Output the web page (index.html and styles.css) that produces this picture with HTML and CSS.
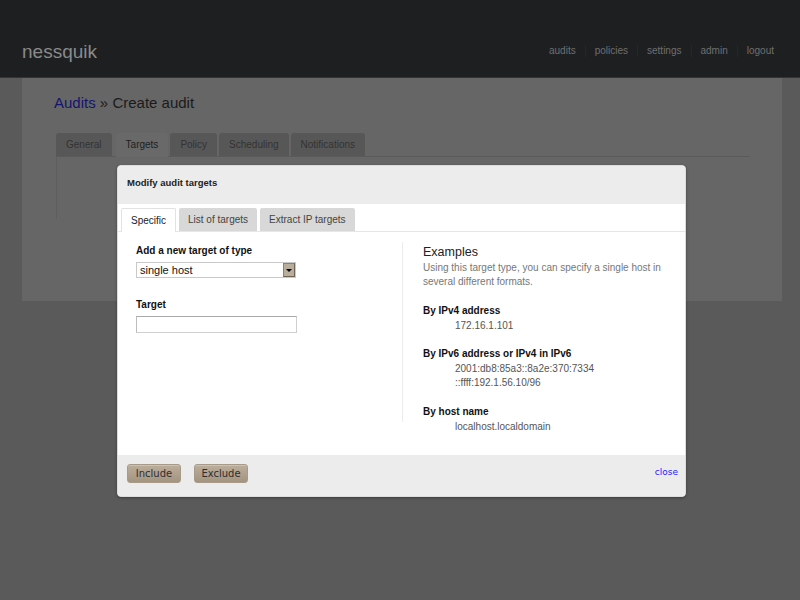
FILE: index.html
```html
<!DOCTYPE html>
<html>
<head>
<meta charset="utf-8">
<title>nessquik - Create audit</title>
<link rel="stylesheet" href="styles.css">
</head>
<body>
<header class="topbar">
  <div class="logo">nessquik</div>
  <nav class="nav">
    <a class="nav-item first">audits</a>
    <a class="nav-item">policies</a>
    <a class="nav-item">settings</a>
    <a class="nav-item">admin</a>
    <a class="nav-item">logout</a>
  </nav>
</header>
<div class="stage">
  <main class="page">
    <h1 class="crumbs"><a class="crumb-link">Audits</a> » Create audit</h1>
    <div class="tabs">
      <span class="tab">General</span>
      <span class="tab active">Targets</span>
      <span class="tab">Policy</span>
      <span class="tab">Scheduling</span>
      <span class="tab">Notifications</span>
    </div>
    <div class="tabpanel"></div>
  </main>

  <section class="modal">
    <div class="modal-head">Modify audit targets</div>
    <div class="mtabs">
      <span class="mtab active">Specific</span>
      <span class="mtab">List of targets</span>
      <span class="mtab">Extract IP targets</span>
    </div>
    <div class="modal-body">
      <div class="col-left">
        <div class="label">Add a new target of type</div>
        <div class="select"><span class="select-text">single host</span><span class="select-btn"><span class="arrow"></span></span></div>
        <div class="label label-gap">Target</div>
        <div class="input"></div>
      </div>
      <div class="col-right">
        <div class="ex-title">Examples</div>
        <p class="ex-desc">Using this target type, you can specify a single host in several different formats.</p>
        <div class="ex-group g1">
          <div class="ex-head">By IPv4 address</div>
          <div class="ex-val">172.16.1.101</div>
        </div>
        <div class="ex-group g2">
          <div class="ex-head">By IPv6 address or IPv4 in IPv6</div>
          <div class="ex-val">2001:db8:85a3::8a2e:370:7334</div>
          <div class="ex-val">::ffff:192.1.56.10/96</div>
        </div>
        <div class="ex-group g3">
          <div class="ex-head">By host name</div>
          <div class="ex-val">localhost.localdomain</div>
        </div>
      </div>
    </div>
    <div class="modal-foot">
      <div class="buttons">
        <button class="btn">Include</button>
        <button class="btn">Exclude</button>
      </div>
      <a class="close">close</a>
    </div>
  </section>
</div>
</body>
</html>
```
FILE: styles.css
```css
* { box-sizing: border-box; }
html, body { margin: 0; padding: 0; }
body {
  width: 800px;
  height: 600px;
  overflow: hidden;
  background: #5a5a5a;
  font-family: "Liberation Sans", Arial, sans-serif;
}
.topbar {
  height: 78px;
  background: #1e1f21;
  border-bottom: 1px solid #333436;
  display: flex;
  justify-content: space-between;
  align-items: flex-start;
  padding: 38px 17px 0 22px;
}
.logo {
  font-size: 19px;
  line-height: 24px;
  margin-top: 2px;
  color: #8a8a8a;
}
.nav {
  display: flex;
  padding-top: 7px;
}
.nav-item {
  font-size: 10px;
  line-height: 12px;
  color: #6f6f6f;
  padding: 0 9px;
  border-left: 1px solid #26272a;
}
.nav-item.first { border-left: none; }

.stage { position: relative; }
.page {
  margin-left: 22px;
  width: 760px;
  height: 223px;
  background: #666666;
  padding: 15px 32px 0 34px;
}
.crumbs {
  margin: 0 0 0 -2px;
  font-size: 15px;
  font-weight: normal;
  line-height: 20px;
  color: #1b1b1b;
}
.crumb-link { color: #141470; }
.tabs {
  display: flex;
  gap: 2px;
  margin-top: 20px;
  border-bottom: 1px solid #5a5a5a;
  height: 24px;
}
.tab {
  height: 23px;
  padding: 0 10px;
  font-size: 10px;
  line-height: 23px;
  color: #333;
  background: #575757;
  border-radius: 3px 3px 0 0;
}
.tab.active {
  background: #696969;
  color: #1e1e1e;
  height: 24px;
  margin-left: 2px;
}
.tabpanel {
  height: 62px;
  border-left: 1px solid #5e5e5e;
}

.modal {
  position: absolute;
  left: 117px;
  top: 87px;
  width: 569px;
  height: 332px;
  background: #ffffff;
  border: 1px solid #dcdcdc;
  border-radius: 4px;
  box-shadow: 0 1px 3px rgba(0,0,0,0.35);
  display: flex;
  flex-direction: column;
  overflow: hidden;
}
.modal-head {
  height: 38px;
  background: #ececec;
  padding-left: 9px;
  font-size: 9.5px;
  font-weight: bold;
  line-height: 34px;
  color: #222;
}
.mtabs {
  display: flex;
  gap: 3px;
  margin-top: 4px;
  padding: 0 3px;
  height: 24px;
  border-bottom: 1px solid #e6e6e6;
}
.mtab {
  height: 23px;
  padding: 1px 9px 0;
  font-size: 10px;
  line-height: 22px;
  color: #444;
  background: #d8d8d8;
  border-radius: 2px 2px 0 0;
}
.mtab.active {
  background: #fff;
  color: #222;
  height: 24px;
  border: 1px solid #e2e2e2;
  border-bottom: none;
  padding: 1px 9px 0;
  line-height: 21px;
}
.modal-body {
  flex: 1;
  display: flex;
  align-items: flex-start;
  padding: 10px 15px 0 18px;
}
.col-left {
  width: 267px;
  height: 180px;
  border-right: 1px solid #ececec;
}
.label {
  font-size: 10px;
  font-weight: bold;
  line-height: 14px;
  color: #111;
  margin-top: 2px;
}
.label-gap { margin-top: 20px; }
.select {
  margin-top: 4px;
  width: 160px;
  height: 16px;
  border: 1px solid #c9c9c9;
  display: flex;
  justify-content: space-between;
  align-items: stretch;
}
.select-text {
  font-size: 11px;
  line-height: 14px;
  padding-left: 3px;
  color: #111;
}
.select-btn {
  width: 12px;
  background: #b9ad9c;
  border: 1px solid #8d8171;
  border-right-color: #6e6354;
  border-bottom-color: #6e6354;
  display: flex;
  align-items: center;
  justify-content: center;
}
.arrow {
  width: 0;
  height: 0;
  border-left: 3px solid transparent;
  border-right: 3px solid transparent;
  border-top: 3px solid #000;
}
.input {
  margin-top: 4px;
  width: 161px;
  height: 17px;
  border: 1px solid #cfcfcf;
  border-top-color: #a9a9a9;
  border-left-color: #bdbdbd;
}
.col-right {
  padding-left: 20px;
}
.ex-title {
  font-size: 12.5px;
  line-height: 16px;
  margin-top: 2px;
  color: #222;
}
.ex-desc {
  margin: 1px 0 0;
  font-size: 10px;
  line-height: 14px;
  color: #777;
  width: 240px;
}
.ex-group { margin-top: 14px; }
.ex-group.g1 { margin-top: 15px; }
.ex-group.g3 { margin-top: 15px; }
.ex-head {
  font-size: 10px;
  font-weight: bold;
  line-height: 14px;
  color: #111;
}
.ex-val {
  font-size: 10px;
  line-height: 14px;
  padding-left: 32px;
  color: #555;
  margin-top: 1px;
}
.ex-val + .ex-val { margin-top: 0; }

.modal-foot {
  height: 41px;
  background: #ececec;
  display: flex;
  justify-content: space-between;
  align-items: flex-start;
  padding: 9px 7px 0 9px;
}
.buttons {
  display: flex;
  gap: 13px;
}
.btn {
  width: 54px;
  height: 19px;
  padding: 0;
  font-family: "DejaVu Sans", Verdana, sans-serif;
  font-size: 10px;
  line-height: 17px;
  color: #2e2e2e;
  background: linear-gradient(#bcae9c, #a39480);
  border: 1px solid #a89a88;
  border-radius: 3px;
  box-shadow: inset 0 1px 0 rgba(255,255,255,0.25);
}
.close {
  font-family: "DejaVu Sans", Verdana, sans-serif;
  font-size: 9px;
  line-height: 12px;
  margin-top: 2px;
  color: #1f1fff;
}
```
